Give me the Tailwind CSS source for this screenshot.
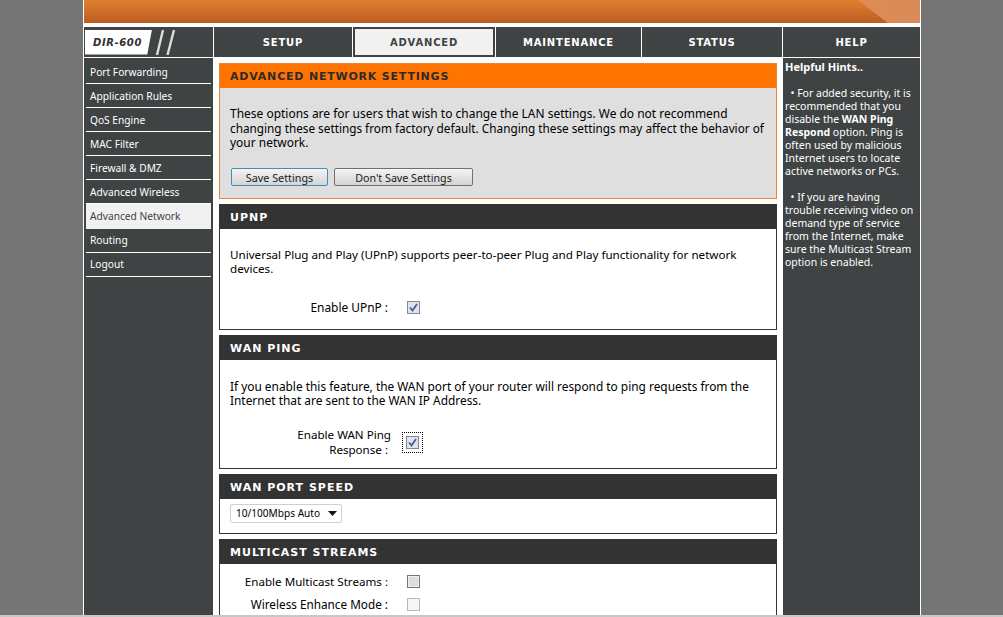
<!DOCTYPE html>
<html>
<head>
<meta charset="utf-8">
<script src="https://cdn.jsdelivr.net/npm/@tailwindcss/browser@4"></script>
</head>
<body class="bg-[#757575] overflow-hidden font-['Noto_Sans',sans-serif] text-[12px] leading-[15px] text-black">
<div class="h-[615px] overflow-hidden">
  <div class="w-[838px] h-[615px] ml-[83px] bg-white pl-px pr-px flex flex-col overflow-hidden">
    <div class="relative h-[23px] shrink-0 bg-gradient-to-b from-[#e07f2e] to-[#bd5c22] overflow-hidden">
      <div class="absolute right-0 top-0 w-[62px] h-[23px] bg-gradient-to-r from-[#dd8c54] to-[#d98a58] [clip-path:polygon(0_0,100%_0,100%_100%,48%_100%)]"></div>
    </div>
    <!-- top nav -->
    <div class="flex h-[30px] mt-[4px] shrink-0 gap-px text-white font-['DejaVu_Sans',sans-serif] font-bold text-[10px] tracking-[0.8px]">
      <div class="w-[129px] bg-[#404343] flex items-center pl-px">
        <div class="w-[67px] h-[25px] bg-white [clip-path:polygon(0_0,100%_0,93%_100%,0_100%)] flex items-center pl-[8px] text-[#303030] italic text-[10px] tracking-[0.6px]">DIR-600</div>
        <svg width="24" height="25" viewBox="0 0 24 25" class="ml-[1px]"><path d="M10 0 L4 25 M21 0 L14.5 25" stroke="#dcdcdc" stroke-width="2.4" fill="none"/></svg>
      </div>
      <div class="w-[138px] bg-[#404343] flex items-center justify-center">SETUP</div>
      <div class="w-[142px] bg-[#404343] p-[2px] flex"><div class="flex-1 bg-[#f1f1f1] text-[#404343] flex items-center justify-center">ADVANCED</div></div>
      <div class="w-[145px] bg-[#404343] flex items-center justify-center">MAINTENANCE</div>
      <div class="w-[140px] bg-[#404343] flex items-center justify-center">STATUS</div>
      <div class="flex-1 bg-[#404343] flex items-center justify-center">HELP</div>
    </div>
    <div class="flex flex-1 mt-[1px] min-h-0">
      <!-- left menu -->
      <nav class="w-[129px] shrink-0 bg-[#404343] text-white pt-[2px] pl-[2px] pr-[2px] text-[10.2px]">
        <a class="block h-[24px] pl-[4px] leading-[25px] border-b border-white">Port Forwarding</a>
        <a class="block h-[24px] pl-[4px] leading-[25px] border-b border-white">Application Rules</a>
        <a class="block h-[24px] pl-[4px] leading-[25px] border-b border-white">QoS Engine</a>
        <a class="block h-[24px] pl-[4px] leading-[25px] border-b border-white">MAC Filter</a>
        <a class="block h-[24px] pl-[4px] leading-[25px] border-b border-white">Firewall &amp; DMZ</a>
        <a class="block h-[24px] pl-[4px] leading-[25px] border-b border-white">Advanced Wireless</a>
        <a class="block h-[25px] pl-[4px] leading-[25px] bg-[#f1f1f1] text-[#404343]">Advanced Network</a>
        <a class="block h-[24px] pl-[4px] leading-[23px] border-b border-white">Routing</a>
        <a class="block h-[24px] pl-[4px] leading-[23px] border-b border-white">Logout</a>
      </nav>
      <!-- content -->
      <main class="w-[570px] shrink-0 pl-[6px] pr-[6px] pt-[5px] flex flex-col gap-[5px]">
        <section class="border border-[#e8843c] bg-[#dfdfdf] h-[136px] shrink-0">
          <h1 class="h-[24px] bg-[#ff7300] pl-[10px] leading-[25px] font-['DejaVu_Sans',sans-serif] font-bold text-[11px] tracking-[0.8px] text-[#2b2b2b]">ADVANCED NETWORK SETTINGS</h1>
          <p class="pl-[10px] pt-[19px] leading-[14px] text-[11.97px] whitespace-nowrap">These options are for users that wish to change the LAN settings. We do not recommend<br><span class="text-[11.77px]">changing these settings from factory default. Changing these settings may affect the behavior of</span><br>your network.</p>
          <div class="flex gap-[6px] pl-[11px] pt-[18px]">
            <button class="w-[97px] h-[18px] rounded-[2px] border border-[#3f8fb8] bg-gradient-to-b from-[#f4f4f4] to-[#d4d4d4] pt-[1px] text-[10.8px] leading-[16px] text-[#1a1a1a]">Save Settings</button>
            <button class="w-[139px] h-[18px] rounded-[2px] border border-[#707070] bg-gradient-to-b from-[#f4f4f4] to-[#d4d4d4] pt-[1px] text-[10.7px] leading-[16px] text-[#1a1a1a]">Don't Save Settings</button>
          </div>
        </section>
        <section class="border border-[#333] border-t-0 h-[126px] shrink-0">
          <h2 class="h-[25px] bg-[#333333] text-white pl-[10px] leading-[27px] font-['DejaVu_Sans',sans-serif] font-bold text-[11px] tracking-[1px]">UPNP</h2>
          <p class="pl-[10px] pr-[8px] pt-[19px] leading-[14px] text-[11.65px]">Universal Plug and Play (UPnP) supports peer-to-peer Plug and Play functionality for network devices.</p>
          <div class="flex items-center mt-[24px] text-[11.6px]">
            <span class="w-[168px] text-right text-[11.9px]">Enable UPnP :</span>
            <span class="ml-[19px] w-[13px] h-[13px] border border-[#7f8a99] bg-[#dfe3ea] flex items-center justify-center"><svg width="9" height="9" viewBox="0 0 9 9"><path d="M1 4.5 L3.5 7.5 L8 1" stroke="#4a5a9a" stroke-width="1.8" fill="none"/></svg></span>
          </div>
        </section>
        <section class="border border-[#333] border-t-0 h-[134px] shrink-0">
          <h2 class="h-[25px] bg-[#333333] text-white pl-[10px] leading-[27px] font-['DejaVu_Sans',sans-serif] font-bold text-[11px] tracking-[1px]">WAN PING</h2>
          <p class="pl-[10px] pr-[8px] pt-[19px] leading-[14px] text-[11.88px]">If you enable this feature, the WAN port of your router will respond to ping requests from the Internet that are sent to the WAN IP Address.</p>
          <div class="flex items-center mt-[20px] text-[11.6px]">
            <span class="w-[168px] text-right leading-[15px]"><span class="relative left-[3px]">Enable WAN Ping</span><br>Response :</span>
            <span class="ml-[14px] p-[3px] border border-dotted border-black">
              <span class="w-[13px] h-[13px] border border-[#7f8a99] bg-[#dfe3ea] flex items-center justify-center"><svg width="9" height="9" viewBox="0 0 9 9"><path d="M1 4.5 L3.5 7.5 L8 1" stroke="#4a5a9a" stroke-width="1.8" fill="none"/></svg></span>
            </span>
          </div>
        </section>
        <section class="border border-[#333] border-t-0 h-[60px] shrink-0">
          <h2 class="h-[25px] bg-[#333333] text-white pl-[10px] leading-[27px] font-['DejaVu_Sans',sans-serif] font-bold text-[11px] tracking-[1px]">WAN PORT SPEED</h2>
          <div class="ml-[10px] mt-[5px] w-[112px] h-[19px] border border-[#cfcfcf] rounded-[2px] flex items-center pl-[5px] text-[10.1px]">
            <span class="flex-1">10/100Mbps Auto</span>
            <svg width="9" height="5" viewBox="0 0 9 5" class="mr-[4px]"><path d="M0 0 H9 L4.5 5 Z" fill="#111"/></svg>
          </div>
        </section>
        <section class="border border-[#333] border-t-0 border-b-0 flex-1">
          <h2 class="h-[25px] bg-[#333333] text-white pl-[10px] leading-[27px] font-['DejaVu_Sans',sans-serif] font-bold text-[11px] tracking-[1px]">MULTICAST STREAMS</h2>
          <div class="flex items-center mt-[10px] h-[15px] text-[11.6px]">
            <span class="w-[168px] text-right">Enable Multicast Streams :</span>
            <span class="ml-[19px] w-[13px] h-[13px] border border-[#777] bg-[#dcdcdc] shadow-[inset_0_0_0_1px_#f0f0f0]"></span>
          </div>
          <div class="flex items-center mt-[8px] h-[15px] text-[11.75px]">
            <span class="w-[168px] text-right">Wireless Enhance Mode :</span>
            <span class="ml-[19px] w-[13px] h-[13px] border border-[#b8b8b8] bg-[#f6f6f6]"></span>
          </div>
        </section>
      </main>
      <!-- help -->
      <aside class="flex-1 bg-[#404343] text-white pl-[2px] pr-[3px] pt-[2px] text-[10.5px] leading-[13px]">
        <p class="font-bold mb-[14px] text-[11px] leading-[13px]">Helpful Hints..</p>
        <p class="mb-[13px]">&nbsp;&nbsp;• For added security, it is recommended that you disable the <b>WAN Ping Respond</b> option. Ping is often used by malicious Internet users to locate active networks or PCs.</p>
        <p>&nbsp;&nbsp;• If you are having trouble receiving video on demand type of service from the Internet, make sure the Multicast Stream option is enabled.</p>
      </aside>
    </div>
  </div>
</div>
<div class="h-[2px] bg-[#c8c8c8]"></div>
</body>
</html>
